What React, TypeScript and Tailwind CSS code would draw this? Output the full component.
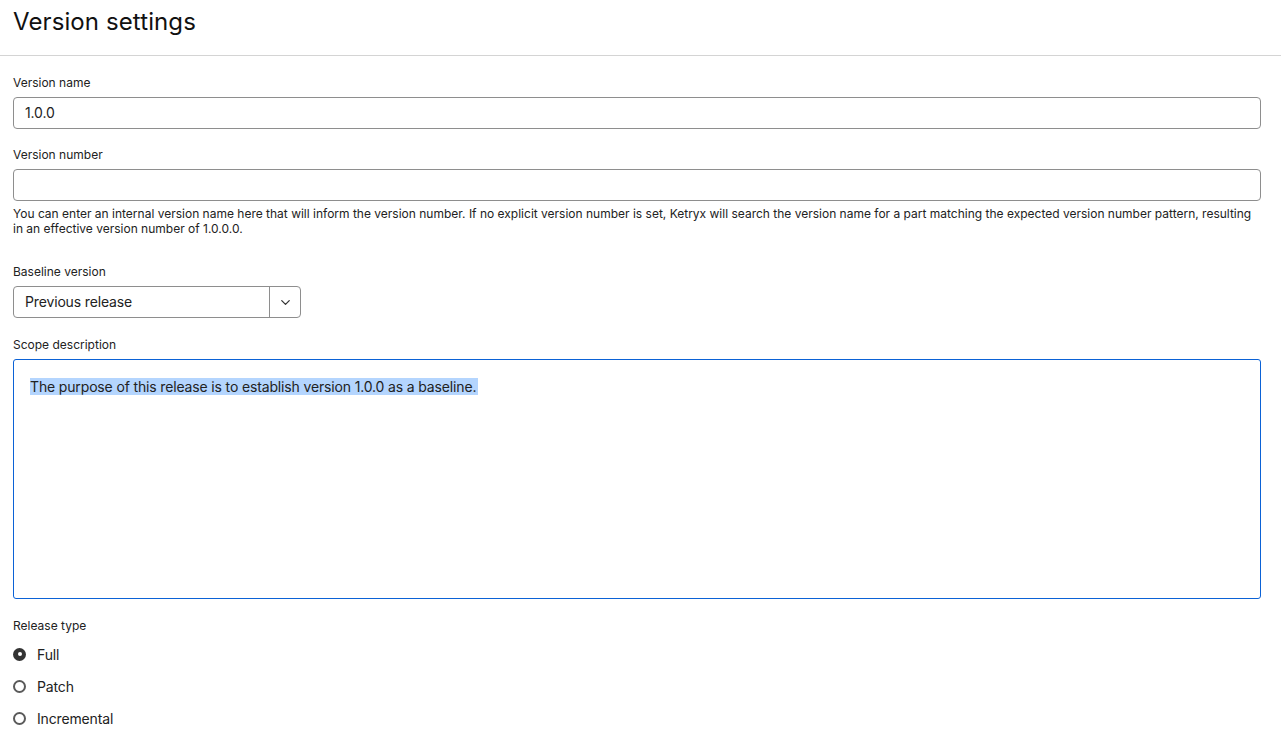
import { ChevronDown } from "lucide-react";

const FONT = { fontFamily: "Inter, 'Noto Sans', sans-serif" };

function Label({ children }: { children: React.ReactNode }) {
  return <div className="text-[12px] leading-[14px] text-[#222] mb-[7px]">{children}</div>;
}

function Radio({ label, checked }: { label: string; checked?: boolean }) {
  return (
    <div className="flex items-center h-[32px] gap-[11px]">
      {checked ? (
        <span className="w-[13px] h-[13px] rounded-full bg-[#333] flex items-center justify-center">
          <span className="w-[4px] h-[4px] rounded-full bg-white" />
        </span>
      ) : (
        <span className="w-[13px] h-[13px] rounded-full border-2 border-[#5a5a5a] bg-white" />
      )}
      <span className="text-[14px] tracking-[-0.15px] text-[#222]">{label}</span>
    </div>
  );
}

export default function App() {
  return (
    <div className="min-h-screen bg-white text-[#222]" style={FONT}>
      {/* header */}
      <div className="h-[56px] border-b border-[#d4d4d4] px-[13px] flex items-center">
        <h1 className="text-[24px] leading-[30px] font-normal text-[#111] -mt-[12px] tracking-[0.1px]">
          Version settings
        </h1>
      </div>

      <div className="pl-[13px] pr-[20px] pt-[20px]">
        <Label>Version name</Label>
        <div className="h-[32px] border border-[#8e8e8e] rounded-[4px] flex items-center px-[11px] text-[14px] tracking-[-0.15px]">
          <span className="-mt-[1px]">1.0.0</span>
        </div>

        <div className="mt-[19px]">
          <Label>Version number</Label>
          <div className="h-[32px] border border-[#8e8e8e] rounded-[4px]" />
          <p className="text-[12px] leading-[15px] text-[#222] mt-[5px] pr-[4px]">
            You can enter an internal version name here that will inform the version number. If no explicit version
            number is set, Ketryx will search the version name for a part matching the expected version number pattern,
            resulting in an effective version number of 1.0.0.0.
          </p>
        </div>

        <div className="mt-[29px]">
          <Label>Baseline version</Label>
          <div className="w-[288px] h-[32px] border border-[#8e8e8e] rounded-[4px] flex">
            <div className="flex-1 flex items-center px-[11px] text-[14px] tracking-[-0.15px]">
              <span className="-mt-[1px]">Previous release</span>
            </div>
            <div className="w-[31px] border-l border-[#8e8e8e] flex items-center justify-center">
              <ChevronDown size={15} strokeWidth={2} className="text-[#333]" />
            </div>
          </div>
        </div>

        <div className="mt-[20px]">
          <Label>Scope description</Label>
          <div className="h-[240px] border border-[#0b62d6] rounded-[3px] px-[16px] pt-[17px] text-[14px] leading-[19px]">
            <span className="tracking-[-0.15px] bg-[#b4d5fe] pr-[2px]">
              The purpose of this release is to establish version 1.0.0 as a baseline.
            </span>
          </div>
        </div>

        <div className="mt-[20px]">
          <Label>Release type</Label>
          <div className="-mt-[2px]">
            <Radio label="Full" checked />
            <Radio label="Patch" />
            <Radio label="Incremental" />
          </div>
        </div>
      </div>
    </div>
  );
}
